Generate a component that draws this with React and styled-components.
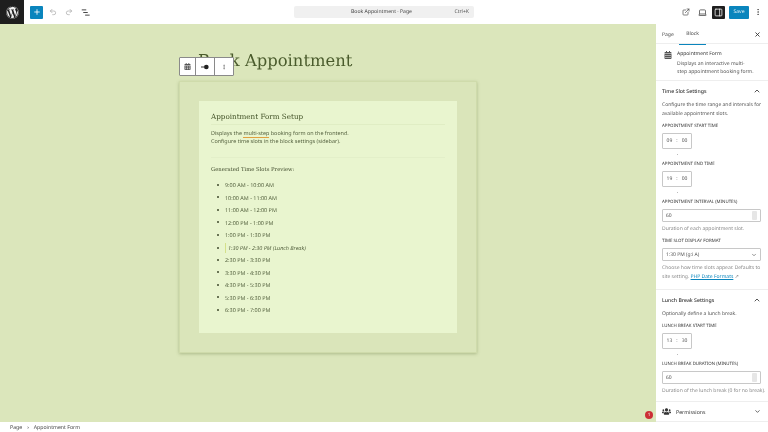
import React from "react";
import styled, { createGlobalStyle } from "styled-components";
import { FaWordpress, FaUsers, FaCalendarAlt } from "react-icons/fa";
import {
  Plus,
  Undo2,
  Redo2,
  ExternalLink,
  Laptop,
  PanelRight,
  MoreVertical,
  ChevronUp,
  ChevronDown,
  X,
} from "lucide-react";

const GlobalStyle = createGlobalStyle`
  html, body { margin: 0; padding: 0; height: 100%; overflow: hidden; background: #fff; }
  body {
    font-family: "Noto Sans", "Open Sans", sans-serif;
    color: #1e1e1e;
    text-rendering: geometricPrecision;
  }
  * { box-sizing: border-box; }
`;

const Page = styled.div`
  width: 768px;
  height: 432px;
  display: flex;
  flex-direction: column;
  background: #fff;
  position: relative;
  overflow: hidden;
  filter: blur(0.3px);
`;

const TopBar = styled.header`
  height: 24px;
  flex: none;
  display: flex;
  align-items: center;
  background: #fff;
`;

const WpLogo = styled.div`
  width: 24px;
  height: 24px;
  background: #1e1e1e;
  color: #f0f0f0;
  display: flex;
  align-items: center;
  justify-content: center;
`;

const Tools = styled.div`
  width: 270px;
  display: flex;
  align-items: center;
  gap: 8px;
  padding-left: 6px;
  color: #444;
`;

const AddButton = styled.div`
  width: 13px;
  height: 13px;
  border-radius: 1px;
  background: #0a85bd;
  color: #fff;
  display: flex;
  align-items: center;
  justify-content: center;
  margin-right: -2px;
`;

const Faded = styled.span`
  display: flex;
  color: #a5a5a5;
`;

const CommandBar = styled.div`
  width: 180px;
  height: 12px;
  background: #f0f0f0;
  border-radius: 2px;
  display: flex;
  align-items: center;
  position: relative;
  justify-content: center;
  font-size: 5.1px;
  color: #444;
  padding-right: 5px;
`;

const Shortcut = styled.span`
  position: absolute;
  right: 5px;
  color: #555;
`;

const TopActions = styled.div`
  margin-left: auto;
  display: flex;
  align-items: center;
  padding-right: 4px;
  color: #444;
`;

const ActionIcon = styled.span`
  display: flex;
  align-items: center;
  justify-content: center;
  width: ${(p) => p.$w || 16}px;
  height: 13px;
  margin-left: ${(p) => p.$ml || 0}px;
  border-radius: 1px;
  background: ${(p) => (p.$active ? "#1e1e1e" : "transparent")};
  color: ${(p) => (p.$active ? "#fff" : "#444")};
`;

const SaveButton = styled.div`
  width: 20px;
  height: 13px;
  margin: 0 3px 0 4px;
  background: #0a85bd;
  color: #dff1f8;
  border-radius: 1px;
  font-size: 5.1px;
  display: flex;
  align-items: center;
  justify-content: center;
`;

const Main = styled.div`
  flex: 1;
  min-height: 0;
  display: flex;
`;

const Canvas = styled.main`
  flex: 1;
  background: #dbe6bb;
  display: flex;
  flex-direction: column;
  align-items: center;
  position: relative;
`;

const PageTitle = styled.h1`
  width: 298px;
  margin: 25px 0 0;
  padding-left: 19px;
  font-family: "DejaVu Serif", "Liberation Serif", serif;
  font-weight: 400;
  font-size: 16.4px;
  line-height: 24px;
  color: #4a5b2c;
  white-space: nowrap;
`;

const BlockToolbar = styled.div`
  position: absolute;
  left: 179px;
  top: 33px;
  height: 19px;
  display: flex;
  background: #fff;
  border: 1px solid #8a8a8a;
  border-radius: 1px;
  color: #555;
`;

const BlockTool = styled.div`
  width: ${(p) => p.$w}px;
  display: flex;
  align-items: center;
  justify-content: center;
  border-left: ${(p) => (p.$first ? "none" : "1px solid #8a8a8a")};
`;

const FormCard = styled.section`
  width: 298px;
  height: 272px;
  margin-top: 8px;
  padding: 19px;
  background: #dae5ba;
  border: 1px solid #cfdbab;
  box-shadow: 0 1px 3px rgba(90, 110, 50, 0.35);
`;

const FormInner = styled.div`
  height: 232px;
  background: #e9f5cf;
  padding: 9px 12px;
`;

const FormHeading = styled.h2`
  margin: 0;
  font-family: "DejaVu Serif", "Liberation Serif", serif;
  font-weight: 400;
  font-size: 7.2px;
  line-height: 14px;
  color: #3f4f24;
  border-bottom: 1px solid #e0edc4;
`;

const FormText = styled.p`
  margin: 4px 0 0;
  font-size: 5.45px;
  line-height: 8px;
  color: #566341;
  padding-bottom: 12px;
  border-bottom: 1px solid #e3efc9;
  white-space: nowrap;
`;

const Squiggle = styled.span`
  border-bottom: 1px solid #e0a040;
`;

const PreviewHeading = styled.h3`
  margin: 7px 0 0;
  font-family: "DejaVu Serif", "Liberation Serif", serif;
  font-weight: 400;
  font-size: 5.3px;
  line-height: 10px;
  color: #3f4a2c;
`;

const SlotList = styled.ul`
  margin: 3.75px 0 0;
  padding: 0 0 0 14px;
  list-style: none;
`;

const Slot = styled.li`
  height: 12.5px;
  display: flex;
  align-items: center;
  font-size: 5.45px;
  color: #566341;
  font-style: ${(p) => (p.$lunch ? "italic" : "normal")};
  position: relative;
  &::before {
    content: "";
    position: absolute;
    left: -8px;
    top: 5px;
    width: 2px;
    height: 2px;
    border-radius: 50%;
    background: #3f4a2c;
  }
  ${(p) =>
    p.$lunch &&
    `padding-left: 2px;
     border-left: 1px solid #d4e08a;
     height: 10px;
     margin: 1.25px 0;
     &::before { left: -9px; top: 4px; }`}
`;

const Sidebar = styled.aside`
  width: 112px;
  flex: none;
  background: #fff;
  overflow: hidden;
  font-size: 5px;
  color: #555;
`;

const Tabs = styled.div`
  height: 20px;
  display: flex;
  align-items: stretch;
  padding-left: 6px;
  border-bottom: 1px solid #eee;
  position: relative;
  font-size: 5px;
  color: #444;
`;

const Tab = styled.div`
  display: flex;
  align-items: center;
  margin-right: ${(p) => p.$gap}px;
  padding: 0 ${(p) => p.$pad || 0}px;
  border-bottom: ${(p) => (p.$active ? "1px solid #0a85bd" : "none")};
  height: 21px;
`;

const CloseIcon = styled.span`
  position: absolute;
  right: 7px;
  top: 7px;
  display: flex;
  color: #333;
`;

const BlockCard = styled.div`
  height: 37px;
  display: flex;
  gap: 5px;
  padding: 7px 8px 0 8px;
  border-bottom: 1px solid #eee;
  color: #555;
`;

const BlockName = styled.div`
  font-size: 5px;
  line-height: 7px;
  color: #333;
  margin-bottom: 2px;
`;

const BlockDesc = styled.div`
  font-size: 5px;
  line-height: 8px;
  color: #555;
  white-space: nowrap;
`;

const PanelHeader = styled.div`
  display: flex;
  justify-content: space-between;
  align-items: center;
  padding: 0 7px 0 6px;
  height: 20px;
  font-size: 5.2px;
  color: #333;
  font-weight: 500;
`;

const Panel = styled.div`
  padding-bottom: ${(p) => p.$pb || 0}px;
  border-bottom: 1px solid #eee;
`;

const PanelBody = styled.div`
  padding: 0 7px 0 6px;
`;

const HelpText = styled.div`
  font-size: 5px;
  line-height: 9px;
  white-space: nowrap;
  color: ${(p) => (p.$muted ? "#8a8a8a" : "#555")};
`;

const FieldLabel = styled.div`
  font-size: 4.4px;
  line-height: 7px;
  text-transform: uppercase;
  color: #333;
  margin-top: ${(p) => p.$mt ?? 6}px;
  margin-bottom: 3px;
  white-space: nowrap;
`;

const TimeBox = styled.div`
  width: 30px;
  height: 16px;
  border: 1px solid #c8c8c8;
  border-radius: 1px;
  display: flex;
  align-items: center;
  justify-content: center;
  gap: 4px;
  font-size: 5px;
  color: #555;
  margin-bottom: 12px;
  position: relative;
  &::after {
    content: "";
    position: absolute;
    left: 14px;
    bottom: -7px;
    width: 1px;
    height: 1px;
    background: #bbb;
  }
`;

const NumberInput = styled.div`
  height: 13px;
  border: 1px solid #c8c8c8;
  border-radius: 1px;
  display: flex;
  align-items: center;
  justify-content: space-between;
  padding: 0 3px;
  font-size: 5px;
  color: #555;
  margin-bottom: 3px;
`;

const Spinner = styled.span`
  width: 5px;
  height: 9px;
  border-radius: 1px;
  background: #e6e6e6;
`;

const DocLink = styled.span`
  color: #0a85bd;
  text-decoration: underline;
`;

const PermissionsRow = styled.div`
  height: 20px;
  display: flex;
  align-items: center;
  padding: 0 7px 0 6px;
  gap: 5px;
  font-size: 5.2px;
  color: #333;
  border-bottom: 1px solid #eee;
`;

const Breadcrumb = styled.footer`
  height: 10px;
  flex: none;
  display: flex;
  align-items: center;
  gap: 5px;
  padding-left: 10px;
  background: #fff;
  font-size: 5.2px;
  color: #444;
`;

const Badge = styled.span`
  position: absolute;
  left: 645px;
  top: 411px;
  width: 8px;
  height: 8px;
  border-radius: 50%;
  background: #cc2f36;
  color: #fff;
  font-size: 4.5px;
  display: flex;
  align-items: center;
  justify-content: center;
`;

const slots = [
  "9:00 AM - 10:00 AM",
  "10:00 AM - 11:00 AM",
  "11:00 AM - 12:00 PM",
  "12:00 PM - 1:00 PM",
  "1:00 PM - 1:30 PM",
  "1:30 PM - 2:30 PM (Lunch Break)",
  "2:30 PM - 3:30 PM",
  "3:30 PM - 4:30 PM",
  "4:30 PM - 5:30 PM",
  "5:30 PM - 6:30 PM",
  "6:30 PM - 7:00 PM",
];

const ListViewIcon = () => (
  <svg width="9" height="9" viewBox="0 0 24 24" fill="none" stroke="currentColor" strokeWidth="2.6">
    <path d="M2 5h12M6 12h12M11 19h12" />
  </svg>
);

const AlignIcon = () => (
  <svg width="8" height="8" viewBox="0 0 24 24" fill="#222" stroke="#666">
    <path d="M0 12h10" strokeWidth="4" />
    <circle cx="16" cy="12" r="7" stroke="none" />
  </svg>
);

const TimeField = ({ h, m }) => (
  <TimeBox>
    <span>{h}</span>
    <span>:</span>
    <span>{m}</span>
  </TimeBox>
);

export default function App() {
  return (
    <Page>
      <GlobalStyle />
      <TopBar>
        <WpLogo>
          <FaWordpress size={13} />
        </WpLogo>
        <Tools>
          <AddButton>
            <Plus size={8} strokeWidth={2.5} />
          </AddButton>
          <Faded>
            <Undo2 size={8} />
          </Faded>
          <Faded>
            <Redo2 size={8} />
          </Faded>
          <ListViewIcon />
        </Tools>
        <CommandBar>
          Book Appointment · Page
          <Shortcut>Ctrl+K</Shortcut>
        </CommandBar>
        <TopActions>
          <ActionIcon>
            <ExternalLink size={8} />
          </ActionIcon>
          <ActionIcon>
            <Laptop size={9} />
          </ActionIcon>
          <ActionIcon $active $w={13} $ml={2}>
            <PanelRight size={9} />
          </ActionIcon>
          <SaveButton>Save</SaveButton>
          <ActionIcon $w={12}>
            <MoreVertical size={8} />
          </ActionIcon>
        </TopActions>
      </TopBar>
      <Main>
        <Canvas>
          <PageTitle>Book Appointment</PageTitle>
          <BlockToolbar>
            <BlockTool $first $w={15}>
              <FaCalendarAlt size={7} />
            </BlockTool>
            <BlockTool $w={19}>
              <AlignIcon />
            </BlockTool>
            <BlockTool $w={19}>
              <MoreVertical size={6} />
            </BlockTool>
          </BlockToolbar>
          <FormCard>
            <FormInner>
              <FormHeading>Appointment Form Setup</FormHeading>
              <FormText>
                Displays the <Squiggle>multi-step</Squiggle> booking form on the frontend.
                <br />
                Configure time slots in the block settings (sidebar).
              </FormText>
              <PreviewHeading>Generated Time Slots Preview:</PreviewHeading>
              <SlotList>
                {slots.map((slot) => (
                  <Slot key={slot} $lunch={slot.includes("Lunch")}>
                    {slot}
                  </Slot>
                ))}
              </SlotList>
            </FormInner>
          </FormCard>
        </Canvas>
        <Sidebar>
          <Tabs>
            <Tab $gap={5.5}>Page</Tab>
            <Tab $active $pad={7} $gap={0}>
              Block
            </Tab>
            <CloseIcon>
              <X size={7} strokeWidth={3} />
            </CloseIcon>
          </Tabs>
          <BlockCard>
            <FaCalendarAlt size={8} style={{ flex: "none" }} />
            <div>
              <BlockName>Appointment Form</BlockName>
              <BlockDesc>
                Displays an interactive multi-
                <br />
                step appointment booking form.
              </BlockDesc>
            </div>
          </BlockCard>
          <Panel $pb={7}>
            <PanelHeader>
              Time Slot Settings
              <ChevronUp size={8} strokeWidth={2.5} />
            </PanelHeader>
            <PanelBody>
              <HelpText>
                Configure the time range and intervals for
                <br />
                available appointment slots.
              </HelpText>
              <FieldLabel $mt={4}>Appointment Start Time</FieldLabel>
              <TimeField h="09" m="00" />
              <FieldLabel $mt={0}>Appointment End Time</FieldLabel>
              <TimeField h="19" m="00" />
              <FieldLabel $mt={0}>Appointment Interval (Minutes)</FieldLabel>
              <NumberInput>
                60
                <Spinner />
              </NumberInput>
              <HelpText $muted>Duration of each appointment slot.</HelpText>
              <FieldLabel $mt={4}>Time Slot Display Format</FieldLabel>
              <NumberInput>
                1:30 PM (g:i A)
                <ChevronDown size={6} strokeWidth={2.5} />
              </NumberInput>
              <HelpText $muted>
                Choose how time slots appear. Defaults to
                <br />
                site setting. <DocLink>PHP Date Formats</DocLink> ↗
              </HelpText>
            </PanelBody>
          </Panel>
          <Panel $pb={5}>
            <PanelHeader>
              Lunch Break Settings
              <ChevronUp size={8} strokeWidth={2.5} />
            </PanelHeader>
            <PanelBody>
              <HelpText>Optionally define a lunch break.</HelpText>
              <FieldLabel $mt={4}>Lunch Break Start Time</FieldLabel>
              <TimeField h="13" m="30" />
              <FieldLabel $mt={0}>Lunch Break Duration (Minutes)</FieldLabel>
              <NumberInput>
                60
                <Spinner />
              </NumberInput>
              <HelpText $muted>Duration of the lunch break (0 for no break).</HelpText>
            </PanelBody>
          </Panel>
          <PermissionsRow>
            <FaUsers size={9} />
            Permissions
            <ChevronDown size={7} strokeWidth={2.5} style={{ marginLeft: "auto" }} />
          </PermissionsRow>
        </Sidebar>
      </Main>
      <Breadcrumb>
        <span>Page</span>
        <span>›</span>
        <span>Appointment Form</span>
      </Breadcrumb>
      <Badge>1</Badge>
    </Page>
  );
}
